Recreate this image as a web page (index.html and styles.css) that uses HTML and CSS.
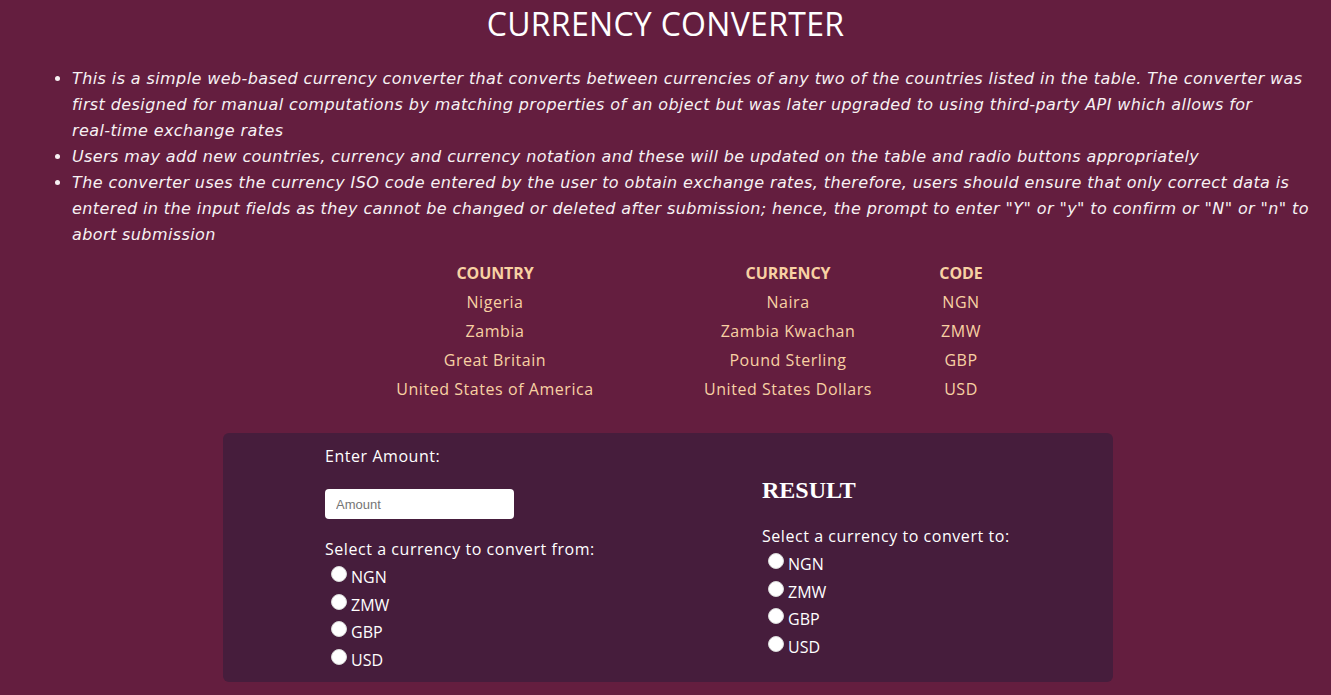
FILE: index.html
```html
<!DOCTYPE html>
<html lang="en">
<head>
<meta charset="utf-8">
<title>Currency Converter</title>
<link rel="stylesheet" href="styles.css">
</head>
<body>
<main class="page">
  <h1 class="title">CURRENCY CONVERTER</h1>
  <ul class="notes">
    <li>This is a simple web-based currency converter that converts between currencies of any two of the countries listed in the table. The converter was first designed for manual computations by matching properties of an object but was later upgraded to using third-party API which allows for <span class="nowrap">real-time</span> exchange rates</li>
    <li>Users may add new countries, currency and currency notation and these will be updated on the table and radio buttons appropriately</li>
    <li>The converter uses the currency ISO code entered by the user to obtain exchange rates, therefore, users should ensure that only correct data is entered in the input fields as they cannot be changed or deleted after submission; hence, the prompt to enter "Y" or "y" to confirm or "N" or "n" to abort submission</li>
  </ul>

  <div class="table">
    <div class="th">COUNTRY</div><div class="th">CURRENCY</div><div class="th">CODE</div>
    <div class="td">Nigeria</div><div class="td">Naira</div><div class="td">NGN</div>
    <div class="td">Zambia</div><div class="td">Zambia Kwachan</div><div class="td">ZMW</div>
    <div class="td">Great Britain</div><div class="td">Pound Sterling</div><div class="td">GBP</div>
    <div class="td">United States of America</div><div class="td">United States Dollars</div><div class="td">USD</div>
  </div>

  <section class="card">
    <div class="col col-from">
      <label class="label" for="amount">Enter Amount:</label>
      <input class="amount" id="amount" type="text" placeholder="Amount">
      <p class="label select-from">Select a currency to convert from:</p>
      <div class="radios">
        <label class="radio"><input type="radio" name="from"><span>NGN</span></label>
        <label class="radio"><input type="radio" name="from"><span>ZMW</span></label>
        <label class="radio"><input type="radio" name="from"><span>GBP</span></label>
        <label class="radio"><input type="radio" name="from"><span>USD</span></label>
      </div>
    </div>
    <div class="col col-to">
      <h2 class="result">RESULT</h2>
      <p class="label select-to">Select a currency to convert to:</p>
      <div class="radios">
        <label class="radio"><input type="radio" name="to"><span>NGN</span></label>
        <label class="radio"><input type="radio" name="to"><span>ZMW</span></label>
        <label class="radio"><input type="radio" name="to"><span>GBP</span></label>
        <label class="radio"><input type="radio" name="to"><span>USD</span></label>
      </div>
    </div>
  </section>
</main>
</body>
</html>
```

FILE: styles.css
```css
html, body {
  margin: 0;
  padding: 0;
  height: 100%;
  overflow: hidden;
}
body {
  background: #641e3f;
  color: #ffffff;
  font-family: "Open Sans", "Noto Sans", sans-serif;
}
.page {
  display: flex;
  flex-direction: column;
  align-items: stretch;
}
.title {
  margin: 0;
  font-size: 32px;
  font-weight: 400;
  line-height: 48px;
  letter-spacing: 0.3px;
  text-align: center;
  color: #ffffff;
}
.notes {
  margin: 18px 0 0 0;
  padding: 0 12px 0 72px;
  font-family: "DejaVu Sans", "Open Sans", sans-serif;
  font-style: italic;
  font-size: 16px;
  letter-spacing: 0.4px;
  line-height: 26px;
  color: #f7f1f3;
}
.nowrap {
  white-space: nowrap;
}
.table {
  margin: 10px 0 0 340px;
  width: 656px;
  display: grid;
  grid-template-columns: 310px 276px 70px;
  grid-auto-rows: 29px;
  color: #f8d1a3;
  font-size: 16px;
  letter-spacing: 0.55px;
  text-align: center;
  align-items: center;
}
.th {
  font-weight: 700;
  letter-spacing: -0.1px;
}
.card {
  margin: 30px 0 0 223px;
  width: 890px;
  height: 249px;
  box-sizing: border-box;
  background: #461d3c;
  border-radius: 6px;
  padding: 11px 0 0 102px;
  display: grid;
  grid-template-columns: 437px 1fr;
}
.col {
  display: flex;
  flex-direction: column;
  align-items: flex-start;
}
.label {
  margin: 0;
  font-size: 16px;
  letter-spacing: 0.55px;
  line-height: 24px;
  color: #ffffff;
}
.amount {
  margin-top: 21px;
  width: 189px;
  height: 30px;
  box-sizing: border-box;
  border: none;
  border-radius: 4px;
  padding: 0 11px;
  font-family: "Liberation Sans", Arial, sans-serif;
  font-size: 13px;
  background: #ffffff;
  color: #333;
}
.amount::placeholder {
  color: #757575;
}
.select-from {
  margin-top: 18px;
}
.radios {
  display: flex;
  flex-direction: column;
  margin-top: 2px;
}
.radio {
  display: flex;
  align-items: center;
  height: 27.7px;
  font-size: 16px;
  color: #ffffff;
}
.radio input {
  appearance: none;
  -webkit-appearance: none;
  margin: 0 4px 0 6px;
  width: 16px;
  height: 16px;
  border-radius: 50%;
  background: #ffffff;
  border: 1px solid #d8d8d8;
  box-sizing: border-box;
  position: relative;
  top: -3px;
}
.result {
  margin: 32px 0 0 0;
  font-family: "Liberation Serif", "Times New Roman", serif;
  font-size: 24px;
  font-weight: 700;
  line-height: 28px;
  color: #ffffff;
}
.select-to {
  margin-top: 20px;
}
```
